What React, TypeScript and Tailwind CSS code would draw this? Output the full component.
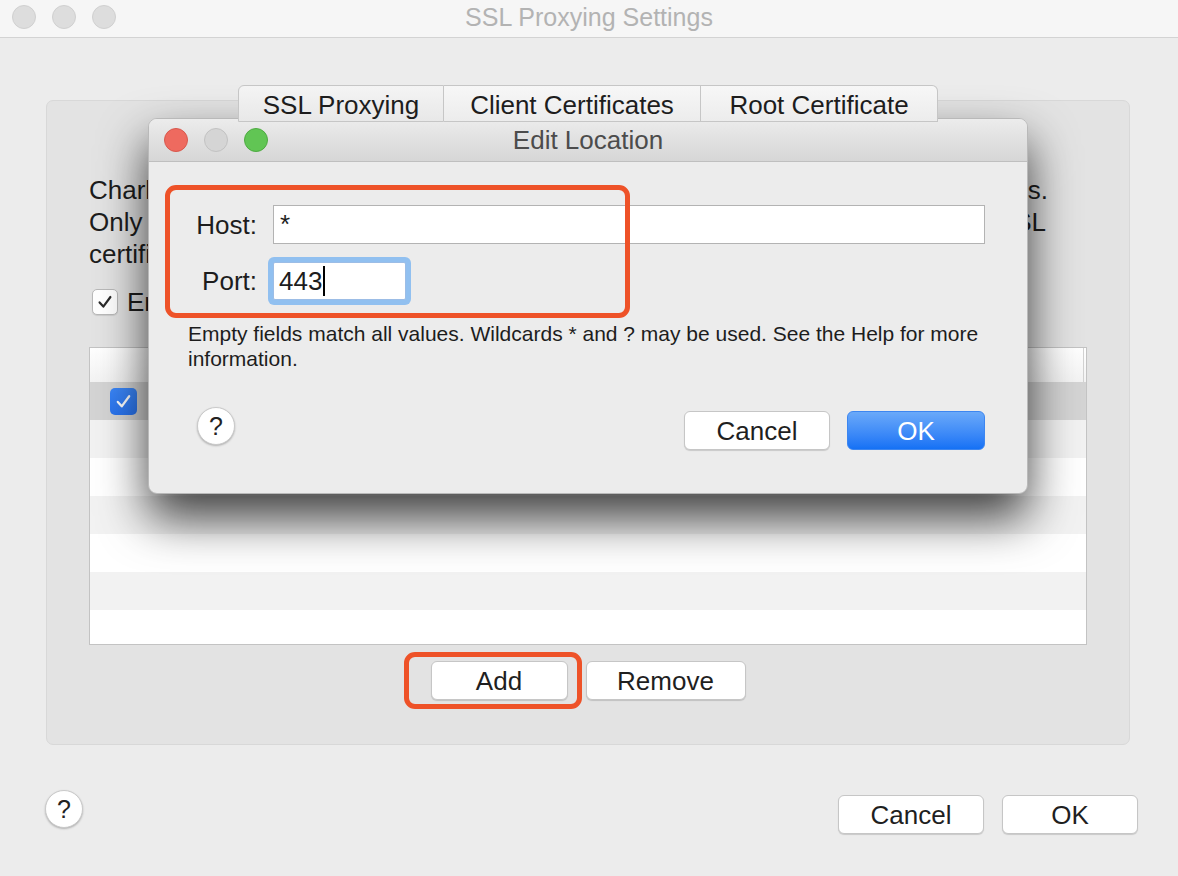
const Check = ({ className }: { className: string }) => (
  <svg viewBox="0 0 24 24" className={className} fill="none">
    <path d="M5.5 12.5 L10 17.5 L18.5 6" stroke="currentColor" strokeWidth="2.6" strokeLinecap="round" strokeLinejoin="round" />
  </svg>
);

const HelpButton = () => (
  <div className="w-[38px] h-[38px] rounded-full bg-white border border-[#cacaca] shadow-[0_1px_2px_rgba(0,0,0,0.25)] flex items-center justify-center text-[25px] leading-none text-[#222]">
    ?
  </div>
);

const Button = ({ label, className }: { label: string; className: string }) => (
  <div
    className={`h-[39px] rounded-[6px] bg-white border border-[#c6c6c6] shadow-[0_1px_1px_rgba(0,0,0,0.15)] flex items-center justify-center text-[26px] leading-none text-[#1f1f1f] ${className}`}
  >
    {label}
  </div>
);

const rows = ['bg-[#d4d4d4]', 'bg-[#f2f2f2]', 'bg-white', 'bg-[#f2f2f2]', 'bg-white', 'bg-[#f2f2f2]', 'bg-white'];

const EditLocation = () => {
  return (
    <div className="absolute left-[148px] top-[118px] w-[880px] h-[376px] rounded-[9px] bg-[#ececec] border border-[#b9b9b9] shadow-[0_24px_48px_rgba(0,0,0,0.75)] overflow-hidden">
      <div className="h-[43px] grid grid-cols-[1fr_auto_1fr] items-center border-b border-[#bfbfbf] bg-gradient-to-b from-[#ececec] to-[#d6d6d6] px-[15px]">
        <div className="flex gap-[16px]">
          <div className="w-[24px] h-[24px] rounded-full bg-[#ee6a5f] border border-[#d8584d]" />
          <div className="w-[24px] h-[24px] rounded-full bg-[#d5d5d5] border border-[#c2c2c2]" />
          <div className="w-[24px] h-[24px] rounded-full bg-[#61c554] border border-[#4eaa42]" />
        </div>
        <div className="text-[26px] text-[#4c4c4c]">Edit Location</div>
        <div />
      </div>

      <div className="pl-[39px] pr-[42px] pt-[43px]">
        <div className="flex items-center gap-[16px]">
          <div className="w-[69px] text-right text-[26px] leading-none">Host:</div>
          <div className="flex-1 h-[39px] bg-white border border-[#b3b3b3] flex items-center pl-[6px] text-[26px]">*</div>
        </div>
        <div className="flex items-center gap-[16px] mt-[18px]">
          <div className="w-[69px] text-right text-[26px] leading-none">Port:</div>
          <div className="w-[133px] h-[38px] bg-white border border-[#9cbde6] rounded-[2px] ring-[5px] ring-[#91c0f0] flex items-center pl-[5px] text-[26px]">
            443
            <span className="w-[2px] h-[30px] bg-black ml-[1px]" />
          </div>
        </div>
        <div className="mt-[21px] text-[21px] leading-[25px] whitespace-nowrap">
          Empty fields match all values. Wildcards * and ? may be used. See the Help for more
          <br />
          information.
        </div>
        <div className="mt-[36px] flex items-start justify-between">
          <div className="ml-[9px]">
            <HelpButton />
          </div>
          <div className="flex gap-[17px] mt-[4px]">
            <Button label="Cancel" className="w-[146px]" />
            <div className="w-[138px] h-[39px] rounded-[6px] bg-gradient-to-b from-[#6aa9f9] to-[#1471f5] border border-[#3d86f0] flex items-center justify-center text-[26px] leading-none text-white">
              OK
            </div>
          </div>
        </div>
      </div>

      {/* annotation */}
      <div className="absolute left-[16px] top-[66px] w-[465px] h-[133px] border-[5px] border-[#ee5228] rounded-[11px]" />
    </div>
  );
};

export default function App() {
  return (
    <div className="relative w-[1178px] h-[876px] overflow-hidden bg-[#ececec] text-[#1d1d1d] font-['Liberation_Sans',Arial,sans-serif]">
      <div className="h-[38px] bg-[#f6f6f6] border-b border-[#d3d3d3] grid grid-cols-[1fr_auto_1fr] items-center px-[12px]">
        <div className="flex gap-[16px] -mt-[3px]">
          <div className="w-[24px] h-[24px] rounded-full bg-[#dddddd] border border-[#d0d0d0]" />
          <div className="w-[24px] h-[24px] rounded-full bg-[#dddddd] border border-[#d0d0d0]" />
          <div className="w-[24px] h-[24px] rounded-full bg-[#dddddd] border border-[#d0d0d0]" />
        </div>
        <div className="text-[25px] text-[#b3b3b3] -mt-[2px]">SSL Proxying Settings</div>
        <div />
      </div>

      <div className="pl-[46px] pr-[48px] pt-[47px]">
        <div className="relative z-10 flex justify-center -mb-[22px]">
          <div className="flex h-[37px]">
            <div className="w-[206px] border border-[#c6c6c6] rounded-tl-[6px] bg-gradient-to-b from-[#f4f4f4] to-[#e8e8e8] flex items-center justify-center text-[26px] pt-[3px]">SSL Proxying</div>
            <div className="w-[257px] border-y border-r border-[#c6c6c6] bg-gradient-to-b from-[#f7f7f7] to-[#ececec] flex items-center justify-center text-[26px] pt-[3px]">Client Certificates</div>
            <div className="w-[237px] border-y border-r border-[#c6c6c6] rounded-tr-[6px] bg-gradient-to-b from-[#f7f7f7] to-[#ececec] flex items-center justify-center text-[26px] pt-[3px]">Root Certificate</div>
          </div>
        </div>

        <div className="h-[645px] rounded-[7px] bg-[#e3e3e3] border border-[#d8d8d8] px-[42px] pt-[73px]">
          <div className="text-[26px] leading-[32px] whitespace-nowrap">
            <div className="w-[959px] text-justify [text-align-last:justify]">Charles can show you the plain text contents of SSL requests and responses.</div>
            <div className="w-[957px] text-justify [text-align-last:justify]">Only the locations listed below will be proxied. Charles will issue and sign SSL</div>
            <div>certificates, please press the Help button for more information.</div>
          </div>

          <div className="mt-[16px] h-[32px] flex items-center gap-[9px] pl-[3px]">
            <div className="w-[26px] h-[26px] rounded-[5px] bg-white border border-[#b9b9b9] shadow-[0_1px_1px_rgba(0,0,0,0.1)] flex items-center justify-center text-[#2a2a2a]">
              <Check className="w-[20px] h-[20px]" />
            </div>
            <div className="text-[26px]">Enable SSL Proxying</div>
          </div>

          <div className="mt-[29px] w-[998px] h-[298px] bg-white border border-[#c3c3c3] overflow-hidden">
            <div className="h-[34px] flex bg-gradient-to-b from-white to-[#f3f3f3]">
              <div className="flex-1" />
              <div className="w-[3px] border-l border-[#d2d2d2]" />
            </div>
            {rows.map((bg, i) => (
              <div key={i} className={`h-[38px] flex items-center pl-[20px] ${bg}`}>
                {i === 0 && (
                  <div className="w-[27px] h-[27px] rounded-[5px] bg-gradient-to-b from-[#3b86f7] to-[#2a74ef] flex items-center justify-center text-white">
                    <Check className="w-[21px] h-[21px]" />
                  </div>
                )}
              </div>
            ))}
          </div>

          <div className="mt-[16px] flex justify-center gap-[18px]">
            <div className="relative">
              <Button label="Add" className="w-[137px]" />
              {/* annotation */}
              <div className="absolute -left-[27px] -top-[9px] -right-[14px] -bottom-[9px] border-[5px] border-[#ee5228] rounded-[11px]" />
            </div>
            <Button label="Remove" className="w-[160px]" />
          </div>
        </div>
      </div>

      <div className="mt-[45px] pl-[45px] pr-[40px] flex items-start justify-between">
        <HelpButton />
        <div className="flex gap-[18px] mt-[5px]">
          <Button label="Cancel" className="w-[146px] h-[38px]" />
          <Button label="OK" className="w-[136px] h-[38px]" />
        </div>
      </div>

      <EditLocation />
    </div>
  );
}
